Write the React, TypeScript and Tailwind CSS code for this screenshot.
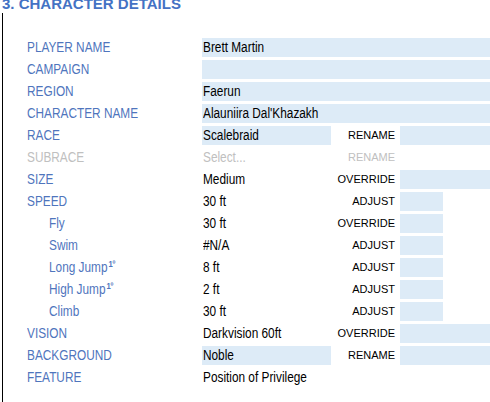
import React from 'react';

type Row = {
  label: string;
  sub?: boolean;
  sup?: string;
  value: string;
  valueBox?: 'full' | 'short' | 'none';
  muted?: boolean;
  action?: string;
  actionBox?: 'wide' | 'narrow' | 'none';
};

const rows: Row[] = [
  { label: 'PLAYER NAME', value: 'Brett Martin', valueBox: 'full' },
  { label: 'CAMPAIGN', value: '', valueBox: 'full' },
  { label: 'REGION', value: 'Faerun', valueBox: 'full' },
  { label: 'CHARACTER NAME', value: "Alauniira Dal'Khazakh", valueBox: 'full' },
  { label: 'RACE', value: 'Scalebraid', valueBox: 'short', action: 'RENAME', actionBox: 'wide' },
  { label: 'SUBRACE', value: 'Select...', muted: true, action: 'RENAME', actionBox: 'none' },
  { label: 'SIZE', value: 'Medium', action: 'OVERRIDE', actionBox: 'wide' },
  { label: 'SPEED', value: '30 ft', action: 'ADJUST', actionBox: 'narrow' },
  { label: 'Fly', sub: true, value: '30 ft', action: 'OVERRIDE', actionBox: 'narrow' },
  { label: 'Swim', sub: true, value: '#N/A', action: 'ADJUST', actionBox: 'narrow' },
  { label: 'Long Jump', sub: true, sup: '1º', value: '8 ft', action: 'ADJUST', actionBox: 'narrow' },
  { label: 'High Jump', sub: true, sup: '1º', value: '2 ft', action: 'ADJUST', actionBox: 'narrow' },
  { label: 'Climb', sub: true, value: '30 ft', action: 'ADJUST', actionBox: 'narrow' },
  { label: 'VISION', value: 'Darkvision 60ft', action: 'OVERRIDE', actionBox: 'wide' },
  { label: 'BACKGROUND', value: 'Noble', valueBox: 'short', action: 'RENAME', actionBox: 'wide' },
  { label: 'FEATURE', value: 'Position of Privilege' },
];

// the sheet font is a condensed Arial; squeeze Liberation Sans to match
const Narrow: React.FC<{ children: React.ReactNode }> = ({ children }) => (
  <span className="inline-block origin-left scale-x-[0.845] text-[14px] whitespace-nowrap">{children}</span>
);

const App: React.FC = () => {
  return (
    <div className="w-[490px] h-[402px] overflow-hidden bg-white font-['Liberation_Sans',Arial,sans-serif]">
      <div className="-mt-[4px] h-[15px] pl-[2px] text-[15px] leading-[15px] font-bold text-[#4472c4] whitespace-nowrap">
        3. CHARACTER DETAILS
      </div>
      <div className="ml-[2px] mt-[2px] border-l border-black pt-[24px] h-[400px]">
        {rows.map((r) => (
          <div key={r.label} className="flex h-[22px]">
            <div
              className={`w-[199px] flex items-center mt-[1px] mb-[2px] ${r.sub ? 'pl-[46px]' : 'pl-[24px]'} ${
                r.muted ? 'text-[#c0c0c0]' : 'text-[#4f75bd]'
              }`}
            >
              <Narrow>
                {r.label}
                {r.sup && <span className="relative -top-[5px] ml-[1px] text-[9px] font-bold">{r.sup}</span>}
              </Narrow>
            </div>
            {r.valueBox === 'full' ? (
              <div className="flex-1 flex items-center mt-[1px] mb-[2px] pl-[1px] bg-[#ddebf7] text-black">
                <Narrow>{r.value}</Narrow>
              </div>
            ) : (
              <>
                <div
                  className={`w-[129px] flex items-center mt-[1px] mb-[2px] pl-[1px] ${
                    r.valueBox === 'short' ? 'bg-[#ddebf7]' : ''
                  } ${r.muted ? 'text-[#c0c0c0]' : 'text-black'}`}
                >
                  <Narrow>{r.value}</Narrow>
                </div>
                <div
                  className={`w-[64px] flex items-center justify-end mt-[1px] mb-[2px] text-[11px] whitespace-nowrap ${
                    r.muted ? 'text-[#c0c0c0]' : 'text-black'
                  }`}
                >
                  {r.action}
                </div>
                <div className="w-[5px]" />
                {r.actionBox === 'wide' && <div className="flex-1 mt-[1px] mb-[2px] bg-[#ddebf7]" />}
                {r.actionBox === 'narrow' && <div className="w-[43px] mt-[1px] mb-[2px] bg-[#ddebf7]" />}
              </>
            )}
          </div>
        ))}
      </div>
    </div>
  );
};

export default App;
